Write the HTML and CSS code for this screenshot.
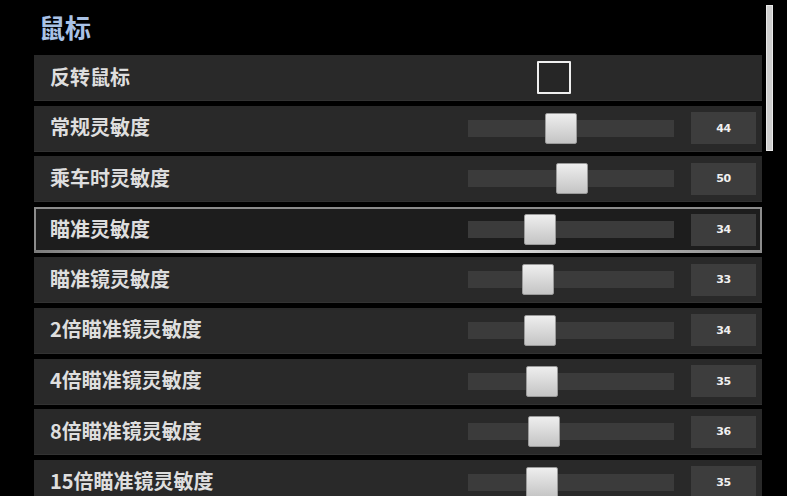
FILE: index.html
```html
<!DOCTYPE html>
<html lang="zh-CN">
<head>
<meta charset="utf-8">
<title>鼠标</title>
<link rel="stylesheet" href="styles.css">
</head>
<body>
<div class="page">
  <h1 class="title">鼠标</h1>
  <div class="list">
    <div class="row">
      <div class="label">反转鼠标</div>
      <div class="controls"><div class="checkbox"></div></div>
    </div>
    <div class="row">
      <div class="label">常规灵敏度</div>
      <div class="controls"><div class="track"><div class="thumb" style="left:77px"></div></div><div class="value">44</div></div>
    </div>
    <div class="row">
      <div class="label">乘车时灵敏度</div>
      <div class="controls"><div class="track"><div class="thumb" style="left:88px"></div></div><div class="value">50</div></div>
    </div>
    <div class="row selected">
      <div class="label">瞄准灵敏度</div>
      <div class="controls"><div class="track"><div class="thumb" style="left:56px"></div></div><div class="value">34</div></div>
    </div>
    <div class="row">
      <div class="label">瞄准镜灵敏度</div>
      <div class="controls"><div class="track"><div class="thumb" style="left:54px"></div></div><div class="value">33</div></div>
    </div>
    <div class="row">
      <div class="label">2倍瞄准镜灵敏度</div>
      <div class="controls"><div class="track"><div class="thumb" style="left:56px"></div></div><div class="value">34</div></div>
    </div>
    <div class="row">
      <div class="label">4倍瞄准镜灵敏度</div>
      <div class="controls"><div class="track"><div class="thumb" style="left:58px"></div></div><div class="value">35</div></div>
    </div>
    <div class="row">
      <div class="label">8倍瞄准镜灵敏度</div>
      <div class="controls"><div class="track"><div class="thumb" style="left:60px"></div></div><div class="value">36</div></div>
    </div>
    <div class="row">
      <div class="label">15倍瞄准镜灵敏度</div>
      <div class="controls"><div class="track"><div class="thumb" style="left:58px"></div></div><div class="value">35</div></div>
    </div>
  </div>
  <div class="scrollbar"></div>
</div>
</body>
</html>
```
FILE: styles.css
```css
html, body {
  margin: 0;
  padding: 0;
  background: #000;
  height: 100%;
  overflow: hidden;
}
body {
  font-family: "Noto Sans CJK SC", "Noto Sans", sans-serif;
  color: #e6e6e6;
}
.page {
  position: relative;
  padding-left: 34px;
  width: 728px;
}
.title {
  margin: 0;
  height: 55px;
  line-height: 54px;
  padding-left: 5px;
  font-size: 26px;
  font-weight: 700;
  color: #a9c2e6;
  letter-spacing: 0;
}
.list {
  display: flex;
  flex-direction: column;
  gap: 4.6px;
}
.row {
  position: relative;
  box-sizing: border-box;
  height: 46px;
  display: flex;
  align-items: center;
  padding-left: 16px;
  padding-right: 6px;
  background: #292929;
  border-bottom: 1px solid #323232;
}
.label {
  flex: 1;
  font-size: 20px;
  font-weight: 700;
  color: #dedede;
  line-height: 1;
  padding-bottom: 2px;
}
.controls {
  width: 288px;
  display: flex;
  align-items: center;
  gap: 17px;
}
.checkbox {
  margin-left: 69px;
  box-sizing: border-box;
  width: 34px;
  height: 33px;
  border: 2.5px solid #efefef;
  border-radius: 1px;
  background: #262626;
}
.track {
  position: relative;
  width: 206px;
  height: 17px;
  background: #3b3b3b;
}
.thumb {
  position: absolute;
  top: -7px;
  box-sizing: border-box;
  width: 32px;
  height: 31px;
  border-radius: 2px;
  border: 1px solid #9a9a9a;
  background: linear-gradient(#eeeeee, #c4c4c4);
}
.value {
  width: 65px;
  height: 32px;
  background: #3d3d3d;
  color: #f0f0f0;
  font-family: "DejaVu Sans", sans-serif;
  font-size: 11px;
  font-weight: 700;
  letter-spacing: -0.5px;
  display: flex;
  align-items: center;
  justify-content: center;
}
.row.selected {
  background: #1d1d1d;
  border: 2px solid #8c8c8c;
  padding-left: 14px;
  padding-right: 4px;
}
.row.selected::after {
  content: "";
  position: absolute;
  left: -2px;
  right: -2px;
  bottom: -2px;
  height: 3px;
  background: linear-gradient(90deg, #7a7a7a 0%, #d8d8d8 30%, #f4f4f4 55%, #bdbdbd 75%, #8c8c8c 100%);
}
.scrollbar {
  position: absolute;
  left: 766px;
  top: 5px;
  box-sizing: border-box;
  width: 7px;
  height: 146px;
  background: #cfcfcf;
  border: 1px solid #e8e8e8;
}
```
